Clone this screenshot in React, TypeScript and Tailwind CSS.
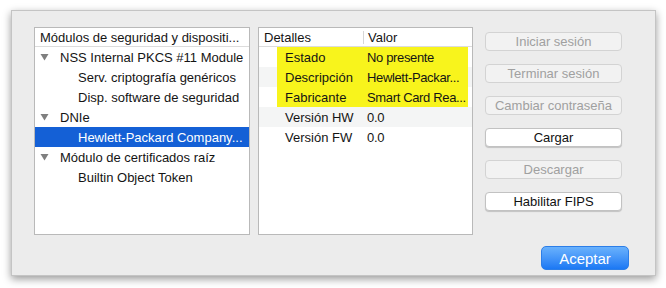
import React from 'react';

const font = { fontFamily: '"Liberation Sans", Arial, sans-serif' };

const Triangle = () => (
    <svg width="9" height="8" viewBox="0 0 9 8" className="shrink-0">
        <path d="M0.5 1 L8.5 1 L4.5 7.5 Z" fill="#7f7f7f" />
    </svg>
);

type TreeRow = { label: string; level: 0 | 1; open?: boolean; selected?: boolean };

const tree: TreeRow[] = [
    { label: 'NSS Internal PKCS #11 Module', level: 0, open: true },
    { label: 'Serv. criptografía genéricos', level: 1 },
    { label: 'Disp. software de seguridad', level: 1 },
    { label: 'DNIe', level: 0, open: true },
    { label: 'Hewlett-Packard Company...', level: 1, selected: true },
    { label: 'Módulo de certificados raíz', level: 0, open: true },
    { label: 'Builtin Object Token', level: 1 },
];

const details = [
    { key: 'Estado', value: 'No presente', mark: true },
    { key: 'Descripción', value: 'Hewlett-Packar...', mark: true },
    { key: 'Fabricante', value: 'Smart Card Rea...', mark: true },
    { key: 'Versión HW', value: '0.0', mark: false },
    { key: 'Versión FW', value: '0.0', mark: false },
];

const buttons = [
    { label: 'Iniciar sesión', enabled: false },
    { label: 'Terminar sesión', enabled: false },
    { label: 'Cambiar contraseña', enabled: false },
    { label: 'Cargar', enabled: true },
    { label: 'Descargar', enabled: false },
    { label: 'Habilitar FIPS', enabled: true },
];

export default function App() {
    return (
        <div className="w-[666px] h-[288px] bg-white pt-[10px] pl-[11px] text-[13px] text-[#141414]" style={font}>
            <div className="w-[645px] h-[266px] bg-[#ececec] border border-[#c4c4c4] shadow-[0_3px_8px_rgba(0,0,0,0.4)] flex flex-col pl-[22px] pt-[16px]">
                <div className="flex">
                    {/* Module tree */}
                    <div className="w-[216px] h-[208px] bg-white border border-[#b9b9b9] overflow-hidden">
                        <div className="h-[19px] flex items-center pl-[5px] border-b border-[#dcdcdc] leading-none whitespace-nowrap">
                            Módulos de seguridad y dispositi...
                        </div>
                        {tree.map((row, i) => (
                            <div
                                key={i}
                                className={`h-[20px] flex items-center whitespace-nowrap leading-none ${row.selected ? 'bg-[#1460d6] text-white font-medium' : ''}`}
                            >
                                {row.level === 0 ? (
                                    <div className="flex items-center">
                                        <div className="w-[25px] flex justify-start pl-[5px]">
                                            {row.open && <Triangle />}
                                        </div>
                                        <span>{row.label}</span>
                                    </div>
                                ) : (
                                    <span className="pl-[43px]">{row.label}</span>
                                )}
                            </div>
                        ))}
                    </div>

                    {/* Details table */}
                    <div className="ml-[8px] w-[215px] h-[208px] bg-white border border-[#b9b9b9] overflow-hidden">
                        <div className="h-[19px] flex items-center border-b border-[#dcdcdc] leading-none">
                            <div className="w-[105px] pl-[5px] border-r border-[#d6d6d6] h-[13px] flex items-center">Detalles</div>
                            <div className="pl-[4px]">Valor</div>
                        </div>
                        {details.map((d, i) => (
                            <div key={i} className={`h-[20px] flex leading-none ${i % 2 === 1 ? 'bg-[#f4f5f5]' : ''}`}>
                                <div className="w-[18px] shrink-0" />
                                <div className={`w-[191px] flex items-center ${d.mark ? 'bg-[#f8f41c]' : ''}`}>
                                    <span className="w-[90px] shrink-0 pl-[8px] whitespace-nowrap">{d.key}</span>
                                    <span className="whitespace-nowrap tracking-[-0.35px]">{d.value}</span>
                                </div>
                            </div>
                        ))}
                    </div>

                    {/* Action buttons */}
                    <div className="ml-[12px] w-[137px] pt-[5px] flex flex-col gap-[13px]">
                        {buttons.map((b) => (
                            <button
                                key={b.label}
                                className={`h-[19px] rounded-[4px] border leading-none text-[13px] flex items-center justify-center ${
                                    b.enabled
                                        ? 'bg-white border-[#c2c2c2] text-[#111] shadow-[0_1px_1px_rgba(0,0,0,0.18)]'
                                        : 'bg-[#f2f2f2] border-[#d3d3d3] text-[#a0a0a0]'
                                }`}
                            >
                                {b.label}
                            </button>
                        ))}
                    </div>
                </div>

                <div className="flex justify-end pr-[26px] mt-[11px]">
                    <button className="w-[88px] h-[24px] rounded-[5px] bg-gradient-to-b from-[#69b1fc] to-[#1a78f4] border border-[#2c7ee8] text-white text-[15px] leading-none flex items-center justify-center">
                        Aceptar
                    </button>
                </div>
            </div>
        </div>
    );
}
